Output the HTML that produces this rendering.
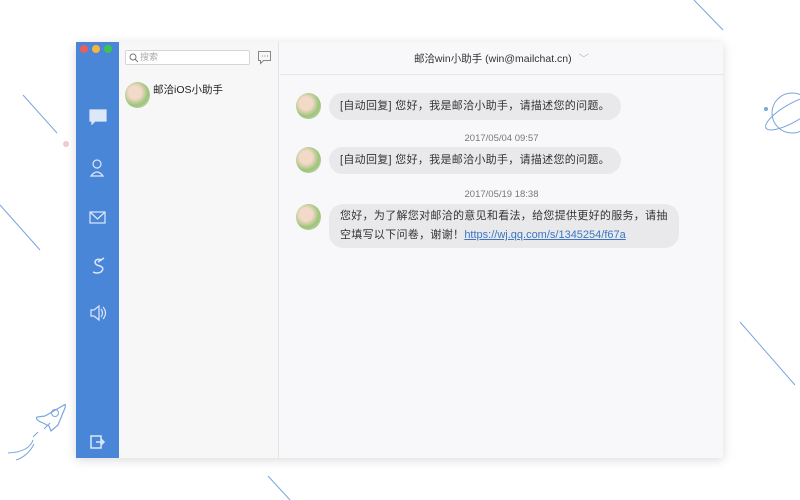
<!DOCTYPE html>
<html><head><meta charset="utf-8"><style>
*{margin:0;padding:0;box-sizing:border-box}
body{width:800px;height:500px;background:#fff;position:relative;overflow:hidden;font-family:"Liberation Sans","Noto Sans CJK SC",sans-serif;color:#333}
.abs{position:absolute}
.win{left:76px;top:42px;width:647px;height:416px;box-shadow:0 2px 10px rgba(0,0,0,.15);background:#f8f8fa}
.side{left:0;top:0;width:43px;height:416px;background:#4a86d8}
.list{left:43px;top:0;width:160px;height:416px;background:#f7f7f7;border-right:1px solid #e4e4e4}
.chat{left:204px;top:0;width:443px;height:416px;background:#f8f8fa}
.dot{width:8px;height:8px;border-radius:50%;top:3px}
.av{width:25px;height:26px;border-radius:50%;background:radial-gradient(circle at 40% 40%,#f3d9c7 0 30%,#9cc47a 60%,#d8e6c8)}
.bub{background:#e9e9eb;border-radius:14px;font-size:11px;letter-spacing:0.3px;padding:0 11px;line-height:27px;color:#333;white-space:nowrap}
.ts{font-size:9.5px;color:#777;width:443px;text-align:center;left:0}
a{color:#3a76c4}
</style></head><body>
<svg class="abs" style="left:0;top:0" width="800" height="500">
<g stroke="#7aa5df" stroke-width="1" fill="none">
<line x1="694" y1="0" x2="723" y2="30"/>
<line x1="23" y1="95" x2="57" y2="133"/>
<line x1="0" y1="205" x2="40" y2="250"/>
<line x1="740" y1="322" x2="795" y2="385"/>
<line x1="268" y1="476" x2="290" y2="500"/>
<circle cx="792" cy="113" r="20"/>
<ellipse cx="792" cy="113" rx="30" ry="9" transform="rotate(-30 792 113)"/>
<path d="M64 405 q2 -2 1 3 l-7 17 -7 6 -2 -5 -6 -3 q-8 -3 -6 -6 l8 -1z" stroke-width="1.2"/>
<circle cx="55" cy="413" r="3.5"/>
<path d="M50 423 l-6 6 M38 432 l-5 5 M33 440 q-4 12 -25 13 M34 444 q-6 12 -18 16"/>
</g>
<circle cx="66" cy="144" r="3" fill="#f3c9d0"/>
<circle cx="766" cy="109" r="2" fill="#7aa5df"/>
</svg>
<div class="abs win">
 <div class="abs side">
  <div class="abs dot" style="left:4px;background:#ee5d56"></div>
  <div class="abs dot" style="left:16px;background:#f5b73b"></div>
  <div class="abs dot" style="left:28px;background:#3fc24e"></div>
  <svg class="abs" style="left:0;top:60px" width="43" height="360" fill="none" stroke="#dce8f8" stroke-width="1.2">
   <path d="M14 8h16v11h-11l-3 3v-3h-2z" fill="#dce8f8"/>
   <circle cx="21" cy="62" r="4"/><path d="M15 74q6-8 12 0z"/>
   <rect x="14" y="110" width="15" height="11"/><path d="M14 110l7.5 7 7.5-7"/>
   <path d="M26 158q-6-2-7 2 0 3 5 4 5 2 1 6-4 2-8 0M22 160l6-4" stroke-width="1.5"/>
   <path d="M15 208h3l5-4v14l-5-4h-3z M25 207q3 4 0 8 M27 205q5 6 0 12"/>
   <path d="M15 334v12h10v-12z M20 340h7 M25 337l3 3-3 3" stroke-width="1.5"/>
  </svg>
 </div>
 <div class="abs list">
  <div class="abs" style="left:6px;top:8px;width:125px;height:15px;background:#fff;border:1px solid #d5d5d5;border-radius:2px;font-size:9px;color:#aaa;line-height:13px;padding-left:14px">搜索
   <svg class="abs" style="left:3px;top:2px" width="10" height="10" fill="none" stroke="#777"><circle cx="4" cy="4" r="3"/><path d="M6 6l3 3"/></svg></div>
  <svg class="abs" style="left:138px;top:8px" width="16" height="16" fill="none" stroke="#888"><path d="M1.5 1.5h12v9h-7l-3 3v-3h-2z"/><path d="M5 6h1M7.5 6h1M10 6h1"/></svg>
  <div class="abs av" style="left:6px;top:40px"></div>
  <div class="abs" style="left:34px;top:40px;font-size:10.5px;color:#222">邮洽iOS小助手</div>
 </div>
 <div class="abs chat">
  <div class="abs" style="left:0;top:0;width:443px;height:33px;border-bottom:1px solid #e6e6e6;font-size:10.5px;text-align:center;line-height:34px;color:#333">邮洽win小助手 (win@mailchat.cn) <span style="color:#bbb;margin-left:4px">﹀</span></div>
  <div class="abs av" style="left:16px;top:51px"></div>
  <div class="abs bub" style="left:49px;top:51px">[自动回复] 您好，我是邮洽小助手，请描述您的问题。</div>
  <div class="abs ts" style="top:91px">2017/05/04 09:57</div>
  <div class="abs av" style="left:16px;top:105px"></div>
  <div class="abs bub" style="left:49px;top:105px">[自动回复] 您好，我是邮洽小助手，请描述您的问题。</div>
  <div class="abs ts" style="top:147px">2017/05/19 18:38</div>
  <div class="abs av" style="left:16px;top:162px"></div>
  <div class="abs bub" style="left:49px;top:162px;line-height:19px;padding:3px 11px">您好，为了解您对邮洽的意见和看法，给您提供更好的服务，请抽<br>空填写以下问卷，谢谢！<a href="#" style="letter-spacing:0">https://wj.qq.com/s/1345254/f67a</a></div>
 </div>
</div>
</body></html>
